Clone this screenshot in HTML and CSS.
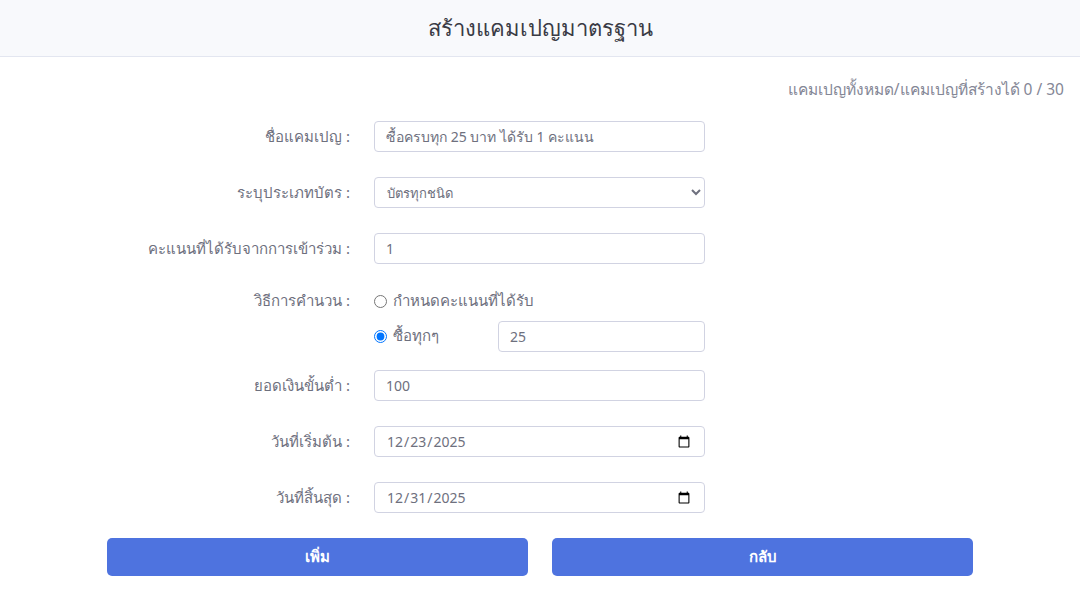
FILE: index.html
```html
<!DOCTYPE html>
<html lang="th">

<head>
  <meta charset="utf-8">
  <title>สร้างแคมเปญมาตรฐาน</title>
  <link rel="stylesheet" href="styles.css">
</head>

<body>
  <div class="modal-header">
    <h1>สร้างแคมเปญมาตรฐาน</h1>
  </div>

  <div class="modal-body">
    <p class="counter">แคมเปญทั้งหมด/แคมเปญที่สร้างได้ 0 / 30</p>

    <form class="campaign-form">
      <div class="row">
        <label for="name">ชื่อแคมเปญ :</label>
        <input type="text" id="name" class="field" value="ซื้อครบทุก 25 บาท ได้รับ 1 คะแนน">
      </div>

      <div class="row">
        <label for="cardType">ระบุประเภทบัตร :</label>
        <select id="cardType" class="field select">
          <option>บัตรทุกชนิด</option>
        </select>
      </div>

      <div class="row">
        <label for="joinPoint">คะแนนที่ได้รับจากการเข้าร่วม :</label>
        <input type="text" id="joinPoint" class="field" value="1">
      </div>

      <div class="row row-radio">
        <label class="radio-label">วิธีการคำนวน :</label>
        <div class="radio-group">
          <label class="radio-item"><input type="radio" name="calc"> กำหนดคะแนนที่ได้รับ</label>
          <div class="radio-line">
            <label class="radio-item"><input type="radio" name="calc" checked> ซื้อทุกๆ</label>
            <input type="text" class="field field-small" value="25">
          </div>
        </div>
      </div>

      <div class="row">
        <label for="minAmount">ยอดเงินขั้นต่ำ :</label>
        <input type="text" id="minAmount" class="field" value="100">
      </div>

      <div class="row">
        <label for="startDate">วันที่เริ่มต้น :</label>
        <input type="date" id="startDate" class="field" value="2025-12-23">
      </div>

      <div class="row">
        <label for="endDate">วันที่สิ้นสุด :</label>
        <input type="date" id="endDate" class="field" value="2025-12-31">
      </div>

      <div class="buttons">
        <button type="button" class="btn">เพิ่ม</button>
        <button type="button" class="btn">กลับ</button>
      </div>
    </form>
  </div>
</body>

</html>
```

FILE: styles.css
```css
body {
  margin: 0;
  font-family: "Noto Sans", "Liberation Sans", sans-serif;
  color: #6e707e;
  background: #fff;
}

.modal-header {
  height: 56px;
  background: #f8f9fc;
  border-bottom: 1px solid #e3e6f0;
  display: flex;
  align-items: center;
  justify-content: center;
}

h1 {
  margin: 0;
  font-size: 22px;
  font-weight: 400;
  color: #3a3b45;
}

.modal-body {
  padding: 0 16px;
}

.counter {
  margin: 20px 0 0;
  text-align: right;
  font-size: 15.5px;
  color: #858796;
}

.campaign-form {
  margin-top: 19px;
}

.row {
  display: grid;
  grid-template-columns: 334px 331px;
  column-gap: 24px;
  align-items: center;
  margin-bottom: 25px;
}

.row label {
  text-align: right;
  font-size: 15px;
}

.field {
  box-sizing: border-box;
  height: 31px;
  padding: 0 11px;
  border: 1px solid #d1d3e2;
  border-radius: 4px;
  font-family: "Noto Sans", "Liberation Sans", sans-serif;
  font-size: 14px;
  color: #6e707e;
  background: #fff;
}

.select {
  font-size: 13px;
  padding-left: 8px;
}

.row-radio {
  align-items: start;
  margin-bottom: 18px;
}

.radio-group {
  display: flex;
  flex-direction: column;
  gap: 8px;
}

.row .radio-item {
  text-align: left;
  font-size: 15px;
  display: flex;
  align-items: center;
  gap: 6px;
}

.radio-item input {
  margin: 0;
  width: 13px;
  height: 13px;
}

.radio-line {
  display: flex;
  align-items: flex-start;
  justify-content: space-between;
}

.radio-line .radio-item {
  margin-top: 3px;
}

.field-small {
  width: 207px;
}

.buttons {
  display: flex;
  justify-content: center;
  gap: 24px;
  margin-top: 2px;
}

.btn {
  width: 421px;
  height: 38px;
  border: none;
  border-radius: 5px;
  background: #4e73df;
  color: #fff;
  font-family: "Noto Sans", "Liberation Sans", sans-serif;
  font-size: 15px;
  font-weight: 600;
  cursor: pointer;
}
```
